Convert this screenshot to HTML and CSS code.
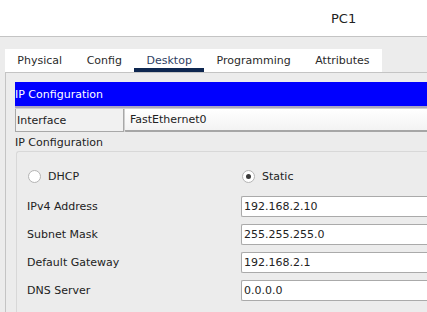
FILE: index.html
```html
<!DOCTYPE html>
<html>
<head>
<meta charset="utf-8">
<link rel="stylesheet" href="styles.css">
</head>
<body>
<div class="window">
  <div class="titlebar"><span class="title">PC1</span></div>
  <div class="main">
    <div class="tabs">
      <div class="tab">Physical</div>
      <div class="tab">Config</div>
      <div class="tab active">Desktop</div>
      <div class="tab">Programming</div>
      <div class="tab">Attributes</div>
    </div>
    <div class="panel">
      <div class="bluebar">IP Configuration</div>
      <div class="iface">
        <div class="iface-label">Interface</div>
        <div class="combo">FastEthernet0</div>
      </div>
      <div class="section-label">IP Configuration</div>
      <div class="group">
        <div class="grid">
          <div class="radio-item"><span class="radio"></span><span>DHCP</span></div>
          <div class="radio-item"><span class="radio checked"></span><span>Static</span></div>
          <div class="field-label">IPv4 Address</div>
          <div class="field">192.168.2.10</div>
          <div class="field-label">Subnet Mask</div>
          <div class="field">255.255.255.0</div>
          <div class="field-label">Default Gateway</div>
          <div class="field">192.168.2.1</div>
          <div class="field-label">DNS Server</div>
          <div class="field">0.0.0.0</div>
        </div>
      </div>
    </div>
  </div>
</div>
</body>
</html>
```

FILE: styles.css
```css
* { box-sizing: border-box; }
html, body {
  margin: 0;
  padding: 0;
  width: 427px;
  height: 312px;
  overflow: hidden;
  background: #ececec;
}
body {
  font-family: "DejaVu Sans", sans-serif;
  font-size: 11px;
  color: #222;
}
.window {
  width: 427px;
  height: 312px;
  display: flex;
  flex-direction: column;
  overflow: hidden;
}
.titlebar {
  height: 37px;
  background: #fff;
  border-bottom: 1px solid #c4c4c4;
  padding-left: 331px;
  line-height: 37px;
}
.title {
  font-size: 13px;
  color: #222;
}
.main {
  flex: 1;
  background: #ececec;
  padding: 12px 0 0 5px;
  display: flex;
  flex-direction: column;
}
.tabs {
  display: flex;
  align-self: flex-start;
  background: #fff;
  height: 23px;
}
.tab {
  padding: 0 12.3px;
  line-height: 23px;
  color: #2a2a2a;
  height: 23px;
}
.tab.active {
  color: #2f3f63;
  border-bottom: 4px solid #0e2750;
  line-height: 23px;
}
.panel {
  flex: 1;
  border-top: 1px solid #c4c4c4;
  border-left: 1px solid #c4c4c4;
  padding: 9px 0 0 9px;
  display: flex;
  flex-direction: column;
}
.bluebar {
  background: #0000ff;
  color: #fff;
  border-bottom: 2px solid #aaa6c2;
  height: 26px;
  line-height: 25px;
}
.iface {
  display: flex;
  height: 24px;
  border-top: 1px solid #d0d0d0;
}
.iface-label {
  width: 109px;
  border: 1px solid #a8a8a8;
  border-top: none;
  background: #f1f1f1;
  padding-left: 1px;
  line-height: 24px;
}
.combo {
  flex: 1;
  background: linear-gradient(#ffffff, #f3f3f3);
  border-left: 1px solid #cfcfcf;
  border-bottom: 2px solid #a6a6a6;
  border-radius: 0 0 0 2px;
  padding-left: 5px;
  line-height: 22px;
}
.section-label {
  height: 19px;
  line-height: 21px;
}
.group {
  margin-left: 1px;
  flex: 1;
  border: 1px solid #d8d8d8;
  border-right: none;
  border-bottom: none;
  border-radius: 3px 0 0 0;
  padding: 13px 0 0 10px;
}
.grid {
  display: grid;
  grid-template-columns: 214px 1fr;
  grid-template-rows: 24px repeat(4, 21px);
  row-gap: 7px;
}
.radio-item {
  display: flex;
  align-items: center;
  align-self: start;
  height: 20px;
  margin-top: 1px;
  padding-left: 1px;
}
.radio {
  width: 13px;
  height: 13px;
  border-radius: 50%;
  border: 1px solid #b4b4b4;
  background: #fff;
  margin-right: 7px;
  display: flex;
  align-items: center;
  justify-content: center;
}
.radio.checked::after {
  content: "";
  width: 5px;
  height: 5px;
  border-radius: 50%;
  background: #3a3a3a;
}
.field-label {
  line-height: 21px;
}
.field {
  background: #fff;
  border: 1px solid #aaaaaa;
  border-right: none;
  border-radius: 2px 0 0 2px;
  padding-left: 2px;
  line-height: 19px;
}
```
